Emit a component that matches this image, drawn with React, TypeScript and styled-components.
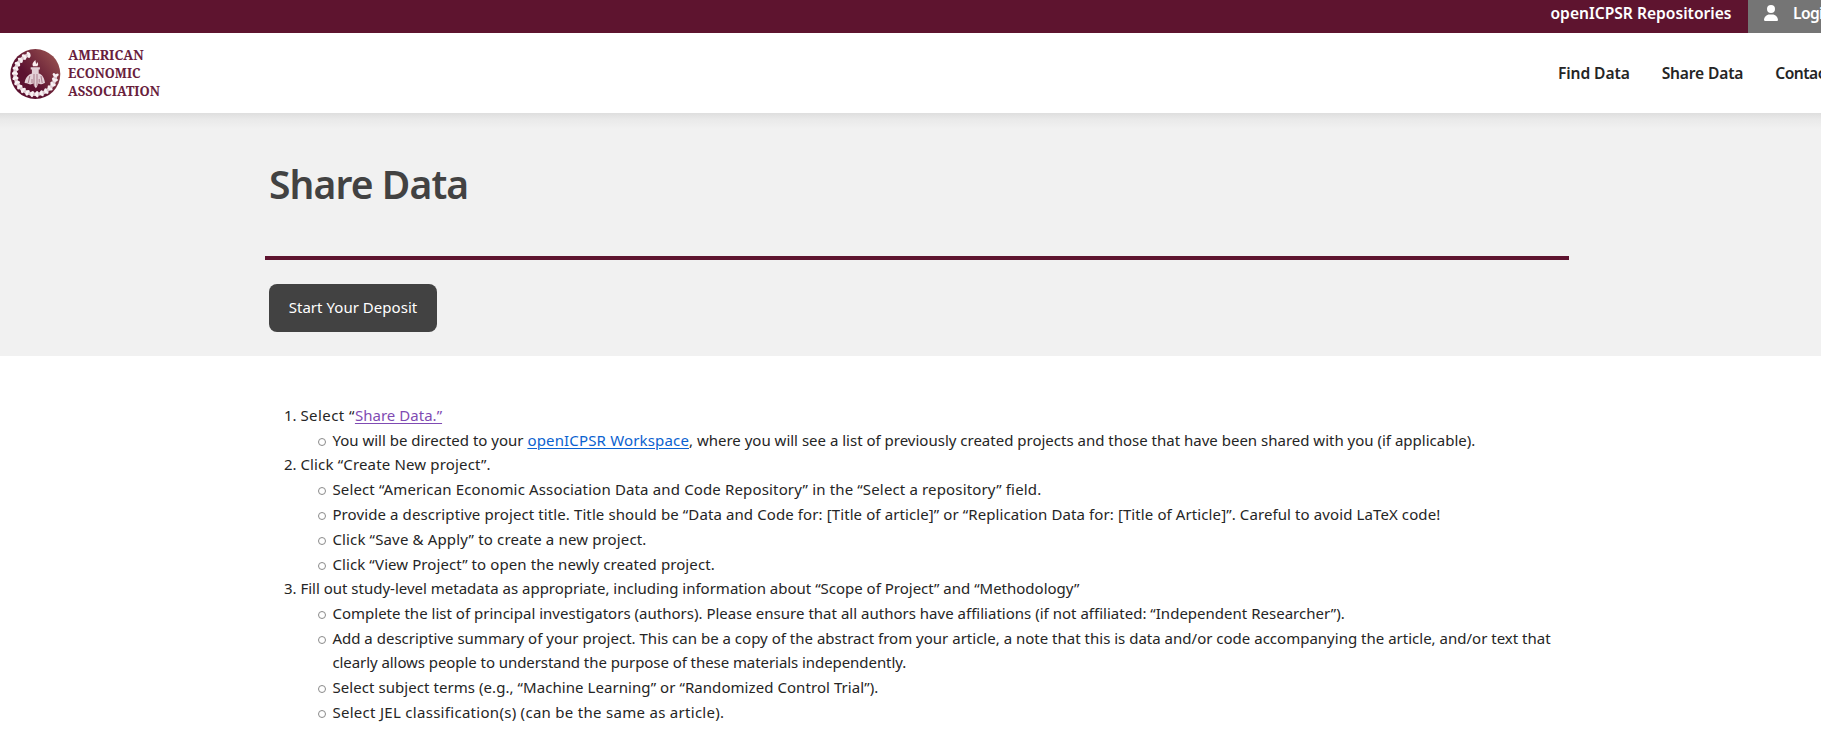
import React from 'react';
import styled, { createGlobalStyle } from 'styled-components';
import { FaUser } from 'react-icons/fa6';

const maroon = '#5e142f';

const GlobalStyle = createGlobalStyle`
  * { box-sizing: border-box; }
  html, body { margin: 0; padding: 0; overflow: hidden; }
  body {
    height: 729px;
    background: #fff;
    color: #252525;
    font-family: 'Noto Sans', 'Open Sans', sans-serif;
    font-size: 15px;
    line-height: 24px;
  }
`;

const TopBar = styled.div`
  display: flex;
  justify-content: flex-end;
  height: 33px;
  background: ${maroon};
  overflow: hidden;
`;

const NavText = styled.a<{ $tracking?: number }>`
  color: inherit;
  font-size: 15.6px;
  font-weight: 600;
  line-height: 24px;
  letter-spacing: ${(p) => p.$tracking ?? 0}px;
  white-space: nowrap;
  text-decoration: none;
`;

const Repositories = styled.div`
  flex: none;
  padding: 1px 16.5px 0 0;
  color: #fff;
`;

const Account = styled.div`
  display: flex;
  flex: none;
  gap: 15px;
  width: 73px;
  padding: 1px 0 0 16px;
  background: #757575;
  color: #fff;
  overflow: hidden;

  svg {
    flex: none;
    width: 14px;
    height: 16px;
    margin-top: 4px;
  }
`;

const Header = styled.header`
  display: flex;
  align-items: center;
  justify-content: space-between;
  height: 80px;
  background: #fff;
`;

const Logo = styled.svg`
  flex: none;
  display: block;
  width: 170px;
  height: 80px;
`;

const MainNav = styled.nav`
  display: flex;
  flex: none;
  gap: 32px;
  width: 264px;
  padding-left: 1px;
  overflow: hidden;
`;

const Hero = styled.section`
  height: 243px;
  padding: 42px 252px 0 265px;
  background: linear-gradient(#dedede, #e9e9e9 6px, #f1f1f1 16px);
`;

const Title = styled.h1`
  margin: 0;
  padding-left: 4px;
  height: 101px;
  color: #424242;
  font-size: 39px;
  font-weight: 600;
  line-height: 58px;
  letter-spacing: -0.9px;
`;

const Rule = styled.hr`
  height: 4px;
  margin: 0 0 24px;
  border: 0;
  background: ${maroon};
`;

const DepositButton = styled.button`
  display: block;
  width: 168px;
  height: 48px;
  margin-left: 4px;
  padding: 0 0 2px;
  border: 0;
  border-radius: 8px;
  background: #424242;
  color: #fff;
  font: inherit;
  letter-spacing: 0.04px;
`;

const Content = styled.main`
  padding: 47px 251px 0 269px;
`;

const Steps = styled.ol`
  margin: 0;
  padding-left: 31.4px;
`;

const Substeps = styled.ul`
  margin: 0;
  padding-left: 18px;
  list-style: none;
`;

const Substep = styled.li`
  display: grid;
  grid-template-columns: 14px 1fr;
  padding-top: 1px;

  &::before {
    content: '';
    width: 6px;
    height: 6px;
    margin-top: 10px;
    border: 1px solid #8a8a8a;
    border-radius: 50%;
  }
`;

const Run = styled.span<{ $tracking?: number; $block?: boolean }>`
  display: ${(p) => (p.$block ? 'block' : 'inline')};
  letter-spacing: ${(p) => p.$tracking ?? 0}px;
  white-space: nowrap;
`;

const TextLink = styled.a<{ $visited?: boolean; $tracking?: number }>`
  color: ${(p) => (p.$visited ? '#7f4bb3' : '#0a62d0')};
  letter-spacing: ${(p) => p.$tracking ?? 0}px;
  text-decoration: underline;
  text-decoration-thickness: 1px;
  text-underline-offset: 2px;
`;

type Line = [text: string, tracking: number];

const createProject: Line[] = [
  ['Select “American Economic Association Data and Code Repository” in the “Select a repository” field.', 0.15],
  ['Provide a descriptive project title. Title should be “Data and Code for: [Title of article]” or “Replication Data for: [Title of Article]”. Careful to avoid LaTeX code!', 0.103],
  ['Click “Save & Apply” to create a new project.', 0.15],
  ['Click “View Project” to open the newly created project.', 0.09],
];

const metadata: Line[][] = [
  [['Complete the list of principal investigators (authors). Please ensure that all authors have affiliations (if not affiliated: “Independent Researcher”).', 0.014]],
  [
    ['Add a descriptive summary of your project. This can be a copy of the abstract from your article, a note that this is data and/or code accompanying the article, and/or text that', 0.007],
    ['clearly allows people to understand the purpose of these materials independently.', -0.065],
  ],
  [['Select subject terms (e.g., “Machine Learning” or “Randomized Control Trial”).', 0.065]],
  [['Select JEL classification(s) (can be the same as article).', 0.29]],
];

/* Leaf pairs of the wreath, from the upper left round the bottom to the right. */
const leaves = Array.from({ length: 19 }, (_, i) => {
  const angle = 254 - i * 13.8;
  const rad = (angle * Math.PI) / 180;
  return { angle, cx: 35.3 + 20.3 * Math.cos(rad), cy: 41 + 20.3 * Math.sin(rad) };
});

function AssociationLogo() {
  return (
    <Logo viewBox="0 0 170 80" aria-label="American Economic Association">
      <defs>
        <linearGradient id="seal" x1="0.15" y1="0.8" x2="0.95" y2="0.15">
          <stop offset="0.3" stopColor="#5c1130" />
          <stop offset="1" stopColor="#96504f" />
        </linearGradient>
      </defs>
      <circle cx="35.3" cy="41" r="25" fill="url(#seal)" />
      <path d="M29.7 21.5A20.3 20.3 0 1 0 55.5 42.8" fill="none" stroke="#dcc6ce" strokeWidth="3.6" />
      <g fill="#f8f1f3">
        {leaves.map((l, i) => (
          <g key={i} transform={`translate(${l.cx} ${l.cy}) rotate(${l.angle})`}>
            <ellipse cx="1.5" cy="0" rx="2.1" ry="1.4" transform="rotate(-38)" />
            <ellipse cx="-1.5" cy="0" rx="2.1" ry="1.4" transform="rotate(38)" />
          </g>
        ))}
      </g>
      <path d="M35.4 27c-2.7 2.3-3.6 4-2.4 6.2h4.4c1.5-2 .6-3.2-.4-4.2 0 1-.4 1.6-1 2 .2-1.6-.7-2.4-.6-4z" fill="#fbeff0" />
      <path d="M30.7 34.2h9.2v2.3h-1.2v4c3.3.6 5.6 4 6.3 9.500-1.6.3-2.3 1.2-3.6 1.2-1.2 0-1.8-.8-3-.8l-1.3 3.200-1.2 1.600-1.4-1.600-1-3.200c-1.4 0-1.8 1-3 1-1.4 0-3-1.200-5.900-1.400.7-5.400 4-8.700 7.300-9.500v-4h-1.200z" fill="#e3cfd6" />
      <path d="M34 41v12M37 41v12M29.800 43l-1.600 7M41 43l1.200 7M32 46v4M39.200 46v3.500" stroke="#8f566a" strokeWidth="0.7" fill="none" />
      <g fill="#68203c" fontFamily="'Noto Serif', serif" fontWeight="700" fontSize="14">
        <text x="68.3" y="27.2" textLength="75.5" lengthAdjust="spacingAndGlyphs">AMERICAN</text>
        <text x="68" y="44.9" textLength="72.5" lengthAdjust="spacingAndGlyphs">ECONOMIC</text>
        <text x="68" y="62.7" textLength="92" lengthAdjust="spacingAndGlyphs">ASSOCIATION</text>
      </g>
    </Logo>
  );
}

export default function App() {
  return (
    <>
      <GlobalStyle />
      <TopBar>
        <Repositories>
          <NavText>openICPSR Repositories</NavText>
        </Repositories>
        <Account>
          <FaUser />
          <NavText $tracking={-0.6}>Login</NavText>
        </Account>
      </TopBar>
      <Header>
        <AssociationLogo />
        <MainNav>
          <NavText $tracking={-0.1}>Find Data</NavText>
          <NavText $tracking={-0.17}>Share Data</NavText>
          <NavText $tracking={-0.5}>Contact</NavText>
        </MainNav>
      </Header>
      <Hero>
        <Title>Share Data</Title>
        <Rule />
        <DepositButton>Start Your Deposit</DepositButton>
      </Hero>
      <Content>
        <Steps>
          <li>
            <Run $tracking={0.45}>Select “</Run>
            <TextLink $visited $tracking={0.03}>Share Data.”</TextLink>
            <Substeps>
              <Substep>
                <Run>
                  <Run>You will be directed to your </Run>
                  <TextLink $tracking={0.16}>openICPSR Workspace</TextLink>
                  , where you will see a list of previously created projects and those that have been shared with you (if applicable).
                </Run>
              </Substep>
            </Substeps>
          </li>
          <li>
            <Run $tracking={0.165}>Click “Create New project”.</Run>
            <Substeps>
              {createProject.map(([text, tracking]) => (
                <Substep key={text}>
                  <Run $tracking={tracking}>{text}</Run>
                </Substep>
              ))}
            </Substeps>
          </li>
          <li>
            <Run>
              Fill out study-level metadata as appropriate, including information about “Scope of Project” and “Methodology”
            </Run>
            <Substeps>
              {metadata.map((lines) => (
                <Substep key={lines[0][0]}>
                  <div>
                    {lines.map(([text, tracking]) => (
                      <Run key={text} $block $tracking={tracking}>{text}</Run>
                    ))}
                  </div>
                </Substep>
              ))}
            </Substeps>
          </li>
        </Steps>
      </Content>
    </>
  );
}
